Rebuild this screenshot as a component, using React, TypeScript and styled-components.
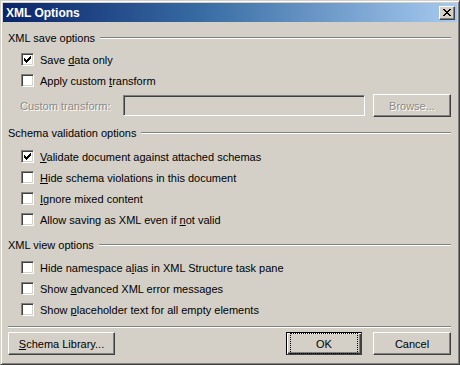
import React from "react";
import styled, { createGlobalStyle } from "styled-components";

const Global = createGlobalStyle`
  html, body { margin: 0; padding: 0; background: #d4d0c8; }
  body { font-family: Tahoma, "Liberation Sans", Arial, sans-serif; font-size: 11px; color: #000; }
`;

const Window = styled.div`
  box-sizing: border-box;
  width: 460px;
  height: 365px;
  background: #d4d0c8;
  border-top: 1px solid #d4d0c8;
  border-left: 1px solid #d4d0c8;
  border-right: 1px solid #404040;
  border-bottom: 1px solid #404040;
  box-shadow: inset 1px 1px 0 #ffffff, inset -1px -1px 0 #808080;
  padding: 2px 2px 2px 2px;
  display: flex;
  flex-direction: column;
`;

const TitleBar = styled.div`
  height: 19px;
  display: flex;
  align-items: center;
  justify-content: space-between;
  padding: 0 2px 0 3px;
  background: linear-gradient(to right, #0a246a 0%, #3a6ea5 45%, #a6caf0 100%);
`;

const Title = styled.span`
  color: #fff;
  font-family: "Liberation Sans", Arial, sans-serif;
  font-weight: bold;
  font-size: 12px;
`;

const CloseBtn = styled.div`
  box-sizing: border-box;
  width: 16px;
  height: 14px;
  background: #d4d0c8;
  border-top: 1px solid #fff;
  border-left: 1px solid #fff;
  border-right: 1px solid #404040;
  border-bottom: 1px solid #404040;
  box-shadow: inset -1px -1px 0 #808080;
  display: flex;
  align-items: center;
  justify-content: center;
`;

const Body = styled.div`
  flex: 1;
  display: flex;
  flex-direction: column;
  padding: 0 6px 0 5px;
`;

const GroupHeader = styled.div<{ $top: number; $bottom: number }>`
  display: flex;
  align-items: center;
  gap: 5px;
  height: 14px;
  margin-top: ${(p) => p.$top}px;
  margin-bottom: ${(p) => p.$bottom}px;
`;

const Etched = styled.div`
  flex: 1;
  height: 0;
  border-top: 1px solid #808080;
  border-bottom: 1px solid #ffffff;
`;

const CheckRow = styled.label`
  display: flex;
  align-items: center;
  height: 21px;
  padding-left: 13px;
  gap: 6px;
`;

const Box = styled.span`
  box-sizing: border-box;
  width: 13px;
  height: 13px;
  background: #fff;
  border-top: 1px solid #808080;
  border-left: 1px solid #808080;
  border-right: 1px solid #fff;
  border-bottom: 1px solid #fff;
  box-shadow: inset 1px 1px 0 #404040, inset -1px -1px 0 #d4d0c8;
  display: flex;
  align-items: center;
  justify-content: center;
  flex: none;
`;

const U = styled.span`
  text-decoration: underline;
`;

const FieldRow = styled.div`
  display: flex;
  align-items: center;
  height: 23px;
  margin-top: 3px;
  padding-left: 12px;
`;

const DisabledLabel = styled.span`
  color: #8a8a8a;
  text-shadow: 1px 1px 0 #ffffff;
  width: 103px;
  flex: none;
`;

const TextField = styled.div`
  box-sizing: border-box;
  width: 242px;
  height: 21px;
  background: #d4d0c8;
  border-top: 1px solid #808080;
  border-left: 1px solid #808080;
  border-right: 1px solid #fff;
  border-bottom: 1px solid #fff;
  box-shadow: inset 1px 1px 0 #404040, inset -1px -1px 0 #d4d0c8;
`;

const Button = styled.div<{ $w: number; $default?: boolean; $disabled?: boolean }>`
  box-sizing: border-box;
  width: ${(p) => p.$w}px;
  height: 23px;
  background: #d4d0c8;
  display: flex;
  align-items: center;
  justify-content: center;
  border: 1px solid ${(p) => (p.$default ? "#000" : "transparent")};
  border-top-color: ${(p) => (p.$default ? "#000" : "#fff")};
  border-left-color: ${(p) => (p.$default ? "#000" : "#fff")};
  border-right-color: #404040;
  border-bottom-color: #404040;
  box-shadow: ${(p) =>
    p.$default
      ? "inset 1px 1px 0 #fff, inset -1px -1px 0 #404040, inset -2px -2px 0 #808080"
      : "inset -1px -1px 0 #808080"};
  color: ${(p) => (p.$disabled ? "#8a8a8a" : "#000")};
  text-shadow: ${(p) => (p.$disabled ? "1px 1px 0 #fff" : "none")};
  flex: none;
`;

const Focus = styled.span`
  box-sizing: border-box;
  width: 100%;
  height: 100%;
  margin: 3px;
  border: 1px dotted #000;
  display: flex;
  align-items: center;
  justify-content: center;
`;

const Separator = styled.div`
  height: 0;
  margin-top: 6px;
  border-top: 1px solid #808080;
  border-bottom: 1px solid #ffffff;
`;

const ButtonBar = styled.div`
  display: flex;
  align-items: center;
  margin-top: 4px;
  gap: 11px;
`;

const Spacer = styled.div`
  flex: 1;
`;

const Check = () => (
  <svg width="7" height="7" viewBox="0 0 7 7">
    <path d="M0 2h1v1h1v1h1v-1h1v-1h1v-1h1v-1h1v3h-1v1h-1v1h-1v1h-1v1h-1v-1h-1v-1h-1z" fill="#000" />
  </svg>
);

const Item = ({ checked, children }: { checked?: boolean; children: React.ReactNode }) => (
  <CheckRow>
    <Box>{checked && <Check />}</Box>
    <span>{children}</span>
  </CheckRow>
);

export default function App() {
  return (
    <>
      <Global />
      <Window>
        <TitleBar>
          <Title>XML Options</Title>
          <CloseBtn>
            <svg width="8" height="7" viewBox="0 0 8 7">
              <path d="M0 0h2v1h1v1h2v-1h1v-1h2v1h-1v1h-1v1h-1v1h1v1h1v1h1v1h-2v-1h-1v-1h-2v1h-1v1h-2v-1h1v-1h1v-1h1v-1h-1v-1h-1v-1h-1z" fill="#000" />
            </svg>
          </CloseBtn>
        </TitleBar>
        <Body>
          <GroupHeader $top={9} $bottom={4}>
            <span>XML save options</span>
            <Etched />
          </GroupHeader>
          <Item checked>
            Save <U>d</U>ata only
          </Item>
          <Item>
            Apply custom <U>t</U>ransform
          </Item>
          <FieldRow>
            <DisabledLabel>Custom transform:</DisabledLabel>
            <TextField />
            <Spacer />
            <Button $w={78} $disabled>
              Browse...
            </Button>
          </FieldRow>
          <GroupHeader $top={9} $bottom={6}>
            <span>Schema validation options</span>
            <Etched />
          </GroupHeader>
          <Item checked>
            <U>V</U>alidate document against attached schemas
          </Item>
          <Item>
            <U>H</U>ide schema violations in this document
          </Item>
          <Item>
            <U>I</U>gnore mixed content
          </Item>
          <Item>
            Allow saving as XML even if <U>n</U>ot valid
          </Item>
          <GroupHeader $top={8} $bottom={5}>
            <span>XML view options</span>
            <Etched />
          </GroupHeader>
          <Item>
            Hide namespace a<U>l</U>ias in XML Structure task pane
          </Item>
          <Item>
            Show <U>a</U>dvanced XML error messages
          </Item>
          <Item>
            Show <U>p</U>laceholder text for all empty elements
          </Item>
          <Separator />
          <ButtonBar>
            <Button $w={107}>
              <U>S</U>chema Library...
            </Button>
            <Spacer />
            <Button $w={76} $default>
              <Focus>OK</Focus>
            </Button>
            <Button $w={78}>Cancel</Button>
          </ButtonBar>
        </Body>
      </Window>
    </>
  );
}
